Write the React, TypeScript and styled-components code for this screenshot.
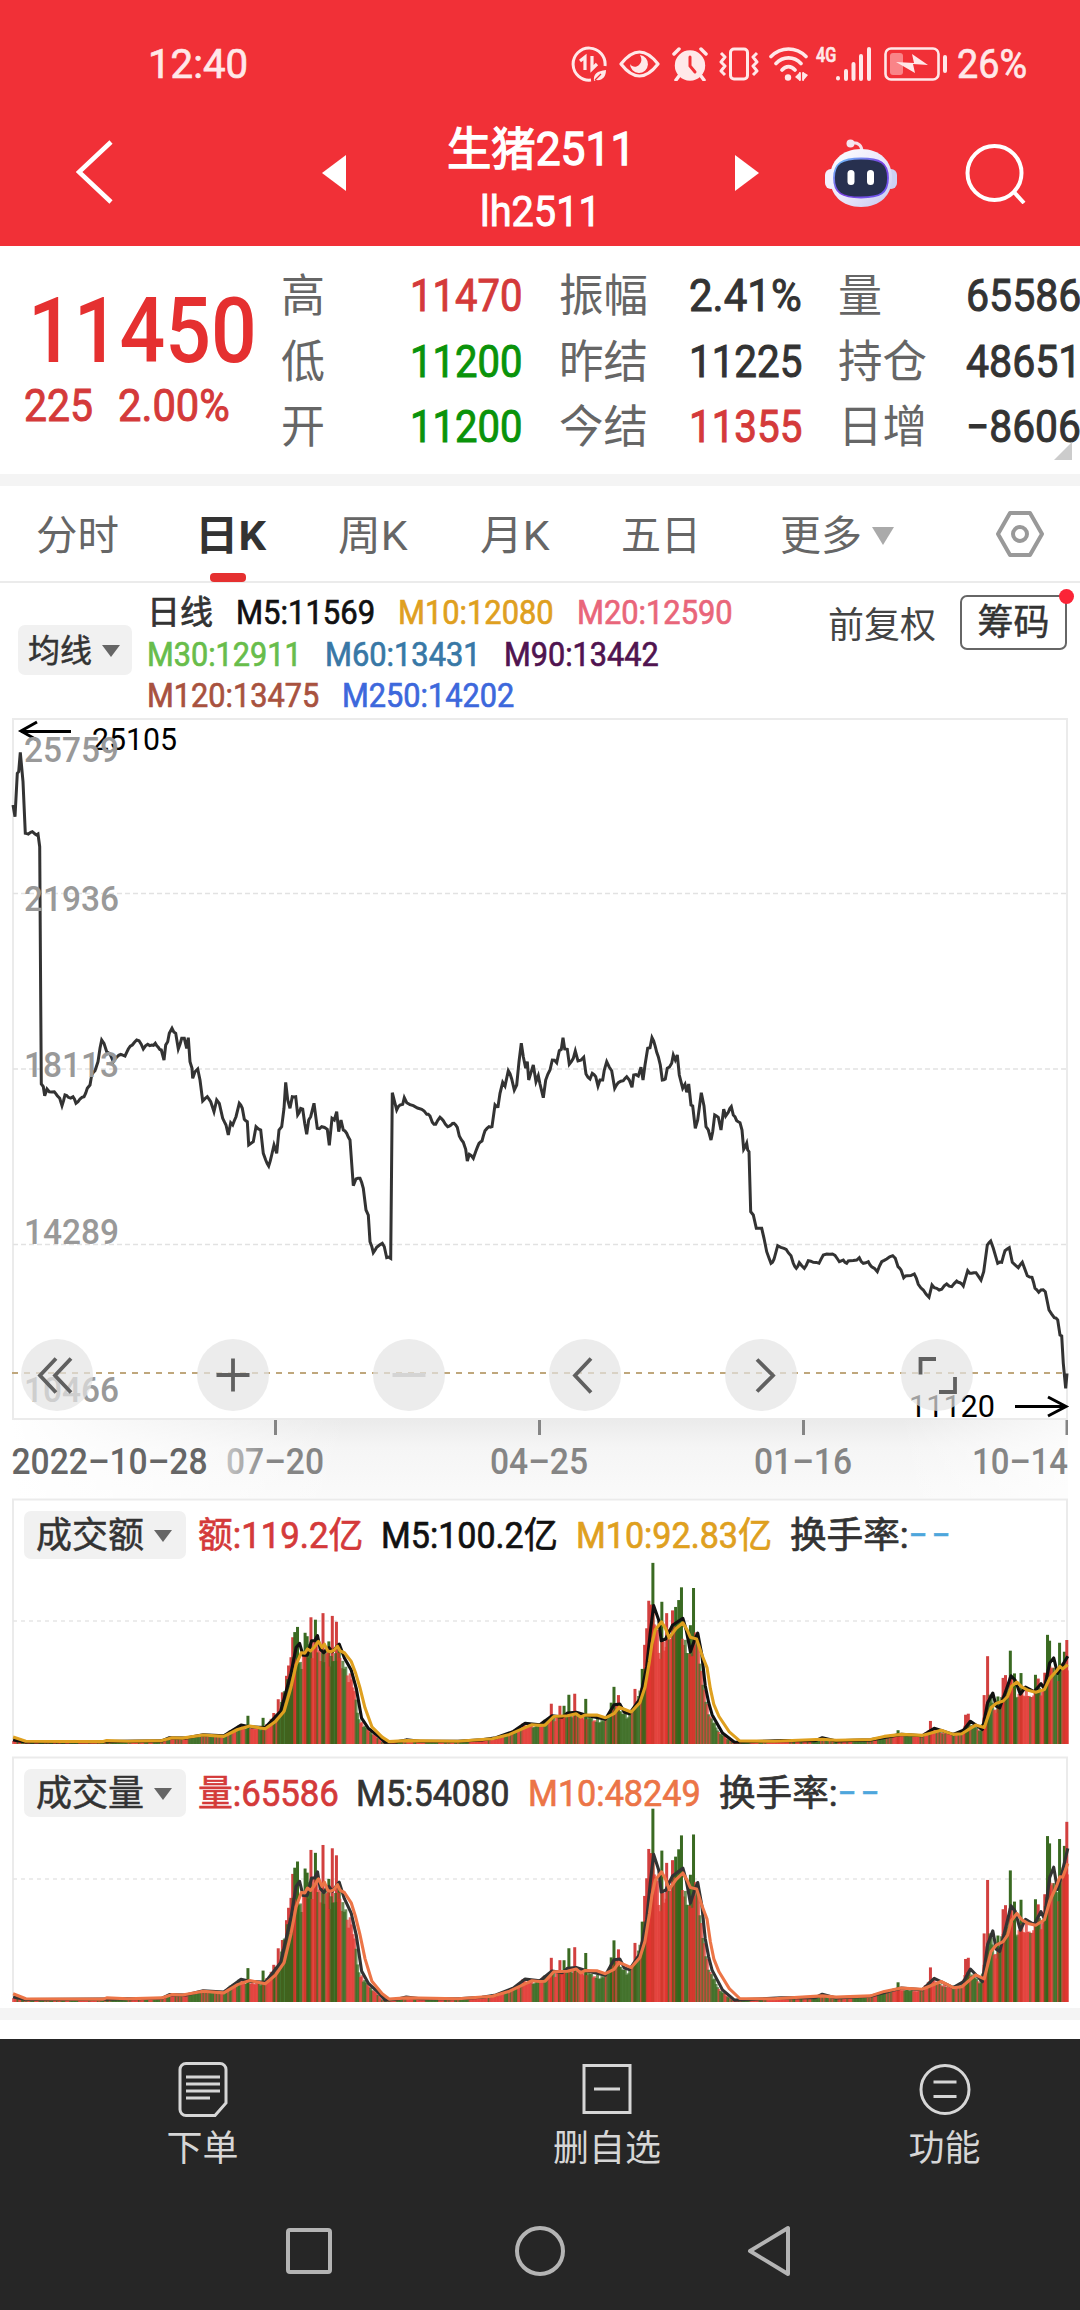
import React, { useLayoutEffect, useRef, useState } from "react";
import styled, { createGlobalStyle } from "styled-components";

const FONT = `Roboto, "Noto Sans CJK SC", sans-serif`;
const RED = "#d43a3a";
const GREEN = "#0a930a";
const INK = "#333333";

const GlobalStyle = createGlobalStyle`
  * { box-sizing: border-box; }
  html, body { margin: 0; padding: 0; background: #fff; }
  body { width: 1080px; overflow-x: hidden; font-family: ${FONT}; color: ${INK}; }
  svg { display: block; flex: none; }
`;

/* ---------- condensed text: squeezes a label to the width it is given ---------- */
const FitBox = styled.span<{ $w: number }>`
  display: inline-block;
  flex: none;
  width: ${(p) => p.$w}px;
  white-space: nowrap;
`;
const FitInner = styled.span`
  display: inline-block;
  transform-origin: 0 50%;
`;
function Fit({ w, children }: { w: number; children: React.ReactNode }) {
  const ref = useRef<HTMLSpanElement>(null);
  const [scale, setScale] = useState(1);
  useLayoutEffect(() => {
    if (ref.current) setScale(w / ref.current.offsetWidth);
  }, [w, children]);
  return (
    <FitBox $w={w}>
      <FitInner ref={ref} style={{ transform: `scaleX(${scale})` }}>{children}</FitInner>
    </FitBox>
  );
}

const Screen = styled.div`
  width: 1080px;
  height: 2310px;
  display: flex;
  flex-direction: column;
  background: #fff;
  overflow: hidden;
`;

/* ---------- header ---------- */
const Header = styled.header`
  height: 246px;
  flex: none;
  background: #f13037;
  color: #fff;
`;
const StatusBar = styled.div`
  height: 116px;
  padding: 12px 53px 0 148px;
  display: flex;
  align-items: center;
  color: #ffe8e9;
  font-size: 41px;
  line-height: 100px;
  -webkit-text-stroke: 0.7px currentColor;
`;
const StatusIcons = styled.div`
  margin-left: auto;
  display: flex;
  align-items: center;
`;
const Gap = styled.span<{ $w: number }>`
  width: ${(p) => p.$w}px;
  flex: none;
`;
const NavBar = styled.div`
  height: 114px;
  padding: 0 54px 0 76px;
  display: flex;
  align-items: center;
`;
const Switcher = styled.div`
  margin-left: 209px;
  width: 437px;
  display: flex;
  align-items: center;
  justify-content: space-between;
`;
const Titles = styled.div`
  display: flex;
  flex-direction: column;
  align-items: center;
  padding-top: 13px;
`;
const Title = styled.div`
  font-size: 46px;
  line-height: 64px;
  -webkit-text-stroke: 1.3px currentColor;
`;
const Code = styled.div`
  font-size: 42px;
  line-height: 62px;
  -webkit-text-stroke: 0.9px currentColor;
`;

function StatusGlyphs() {
  const c = "#ffe8e9";
  return (
    <>
      <svg width="36" height="36" viewBox="0 0 36 36" fill="none" stroke={c} strokeWidth="3">
        <path d="M34 20A16 16 0 1 0 20 34" />
        <path d="M9 15l5-4v13M21 10v13l5-5" strokeWidth="3.2" />
        <path d="M23 35c-1-7 3-10 12-11 0 7-4 11-10 10z" fill={c} stroke="none" />
        <path d="M24 34l6-6" stroke="#f13037" strokeWidth="1.3" />
      </svg>
      <Gap $w={12} />
      <svg width="41" height="28" viewBox="0 0 41 28" fill="none">
        <path d="M2 14C9 5 14 2 20.500 2S32 5 39 14C32 23 27 26 20.500 26S9 23 2 14z" stroke={c} strokeWidth="3.200" strokeLinejoin="round" />
        <path d="M21 5a9 9 0 1 1-10 9c2 3 6 4 9 1 3-3 3-6 1-10z" fill={c} />
      </svg>
      <Gap $w={12} />
      <svg width="36" height="34" viewBox="0 0 36 34" fill={c}>
        <circle cx="18" cy="18.500" r="15.200" />
        <path d="M2 7l5-5M34 7l-5-5M7 29l-3 4M29 29l3 4" stroke={c} strokeWidth="3.500" strokeLinecap="round" />
        <path d="M18 10v9l5 6" stroke="#f13037" strokeWidth="3" fill="none" strokeLinecap="round" />
      </svg>
      <Gap $w={11} />
      <svg width="40" height="34" viewBox="0 0 40 34" fill="none" stroke={c} strokeWidth="3">
        <rect x="11.500" y="2" width="17" height="30" rx="3.500" />
        <path d="M2 6l4 4-4 5 4 4-4 5 4 4M38 6l-4 4 4 5-4 4 4 5-4 4" strokeLinejoin="round" />
      </svg>
      <Gap $w={10} />
      <svg width="41" height="34" viewBox="0 0 41 34" fill="none" stroke={c} strokeWidth="3.600" strokeLinecap="round">
        <path d="M2 9.500C12-.5 27-.5 37 9.500M7 16.500c7-7.500 18-7.500 25 0M13 23c4-4.500 9-4.500 13 0" />
        <circle cx="19" cy="30.500" r="3.200" fill={c} stroke="none" />
        <path d="M26 30l5-5v9zM34 25v9l5-6z" fill={c} stroke="none" />
        <path d="M31 26v7M34 26v7" strokeWidth="1.800" />
      </svg>
    </>
  );
}

const NetTag = styled.span`
  margin: 0 0 19px 6px;
  font-size: 21px;
  line-height: 14px;
  font-weight: 500;
  width: 20px;
`;

function SignalBattery() {
  const c = "#ffe8e9";
  return (
    <>
      <NetTag><Fit w={20}>4G</Fit></NetTag>
      <svg width="35" height="34" viewBox="0 0 35 34" stroke={c} strokeWidth="4" strokeLinecap="round">
        <path d="M2 31v.5M10 24v8M17.500 17v15M25 9v23M33 2v30" />
      </svg>
      <Gap $w={13} />
      <svg width="64" height="34" viewBox="0 0 64 34" fill="none">
        <rect x="1.500" y="1.500" width="53" height="31" rx="5.500" stroke={c} strokeWidth="2.600" />
        <rect x="6" y="6" width="13" height="22" rx="3" fill="#f98488" />
        <path d="M12 15l18 1-2-9 16 11-15-1 2 9z" fill={c} />
        <path d="M61 10v14" stroke={c} strokeWidth="4" strokeLinecap="round" />
      </svg>
      <Gap $w={9} />
    </>
  );
}

function Robot() {
  return (
    <svg width="72" height="68" viewBox="0 0 72 68">
      <defs>
        <linearGradient id="shell" x1="0" y1="0" x2="1" y2="1">
          <stop offset="0" stopColor="#ffffff" />
          <stop offset=".55" stopColor="#e9e6fb" />
          <stop offset="1" stopColor="#c3c6ee" />
        </linearGradient>
        <linearGradient id="rim" x1="0" y1="0" x2="1" y2="1">
          <stop offset="0" stopColor="#6fd0ff" />
          <stop offset=".5" stopColor="#7a3fe0" />
          <stop offset="1" stopColor="#6a5af0" />
        </linearGradient>
      </defs>
      <path d="M26 4c8-1 11 3 11 9" stroke="#f8dfe9" strokeWidth="3" fill="none" />
      <circle cx="25.500" cy="4.500" r="4" fill="#f5e6f0" />
      <rect x="0" y="30" width="12" height="20" rx="6" fill="#f3f0fc" />
      <rect x="60" y="30" width="12" height="20" rx="6" fill="#cdd0f3" />
      <path d="M36 10c19 0 31 12 31 29S55 68 36 68 5 56 5 39 17 10 36 10z" fill="url(#shell)" />
      <path d="M36 19.500c19 0 27 4 27 19.500S55 58.500 36 58.500 9 54 9 39s8-19.500 27-19.500z" fill="#27304f" stroke="url(#rim)" strokeWidth="1.800" />
      <rect x="22.500" y="31" width="7" height="15" rx="3.500" fill="#fff" />
      <rect x="42" y="31" width="7" height="15" rx="3.500" fill="#fff" />
    </svg>
  );
}

/* ---------- quote ---------- */
const Quote = styled.section`
  position: relative;
  height: 228px;
  flex: none;
  display: flex;
`;
const LastPrice = styled.div`
  width: 281px;
  flex: none;
  padding: 35px 0 0 24px;
  color: #e53030;
`;
const Big = styled.div`
  font-size: 91px;
  font-weight: 500;
  line-height: 100px;
  padding-left: 4px;
`;
const Change = styled.div`
  display: flex;
  gap: 25px;
  font-size: 45px;
  line-height: 50px;
  color: ${RED};
  -webkit-text-stroke: 1px currentColor;
`;
const Facts = styled.div`
  padding-top: 17px;
  display: grid;
  grid-template-columns: 129px 149px 130px 149px 128px 118px;
  grid-auto-rows: 65.500px;
  line-height: 65px;
  font-size: 45px;
`;
const FactLabel = styled.span`
  padding-top: 1px;
  color: #666;
  font-size: 45px;
`;
const FactValue = styled.span<{ $c?: string }>`
  color: ${(p) => p.$c ?? INK};
  -webkit-text-stroke: 1px currentColor;
`;
const Corner = styled.span`
  position: absolute;
  right: 8px;
  bottom: 14px;
  border-left: 18px solid transparent;
  border-bottom: 18px solid #ccc;
`;
const Band = styled.div`
  height: 12px;
  flex: none;
  background: #f4f4f4;
`;

const FACTS: [string, number, string, number, string?][] = [
  ["高", 44, "11470", 112, RED], ["振幅", 89, "2.41%", 113], ["量", 44, "65586", 115],
  ["低", 44, "11200", 112, GREEN], ["昨结", 89, "11225", 113], ["持仓", 89, "48651", 115],
  ["开", 44, "11200", 112, GREEN], ["今结", 89, "11355", 113, RED], ["日增", 89, "−8606", 115],
];

/* ---------- period tabs ---------- */
const Tabs = styled.nav`
  height: 97px;
  flex: none;
  display: flex;
  align-items: stretch;
  padding-left: 36px;
  border-bottom: 2px solid #ebebeb;
  font-size: 41px;
  line-height: 90px;
  color: #666;
`;
const Tab = styled.div<{ $w: number }>`
  width: ${(p) => p.$w}px;
  padding-top: 4px;
  display: flex;
  align-items: center;
  gap: 10px;
`;
const ActiveTab = styled(Tab)`
  position: relative;
  font-weight: 700;
  color: ${INK};
  &::after {
    content: "";
    position: absolute;
    left: 15px;
    bottom: -1px;
    width: 36px;
    height: 9px;
    border-radius: 4px;
    background: #e53030;
  }
`;
const SettingsTab = styled(Tab)`
  padding-top: 0;
`;
const Caret = styled.span<{ $w: number; $h: number; $c: string }>`
  width: 0;
  height: 0;
  flex: none;
  border-left: ${(p) => p.$w / 2}px solid transparent;
  border-right: ${(p) => p.$w / 2}px solid transparent;
  border-top: ${(p) => p.$h}px solid ${(p) => p.$c};
`;

/* ---------- moving averages ---------- */
const Averages = styled.section`
  height: 135px;
  flex: none;
  display: flex;
`;
const Chip = styled.div<{ $w: number; $h: number; $size: number }>`
  width: ${(p) => p.$w}px;
  height: ${(p) => p.$h}px;
  flex: none;
  display: flex;
  align-items: center;
  justify-content: space-between;
  padding: 1px 14px 0 12px;
  border-radius: 7px;
  background: #f1f1f1;
  color: ${INK};
  font-size: ${(p) => p.$size}px;
  line-height: ${(p) => p.$h}px;
  -webkit-text-stroke: 0.5px currentColor;
`;
const AverageChip = styled(Chip)`
  margin: 42px 0 0 18px;
  padding: 1px 12px 0 10px;
`;
const AverageLines = styled.div`
  width: 696px;
  flex: none;
  padding: 9px 0 0 15px;
`;
const AverageLine = styled.div`
  display: flex;
  gap: 23px;
  height: 41.500px;
  line-height: 41px;
  font-size: 33px;
  -webkit-text-stroke: 0.7px currentColor;
`;
const Tint = styled.span<{ $c: string }>`
  color: ${(p) => p.$c};
`;
const Adjust = styled.div`
  margin-top: 12px;
  width: 132px;
  font-size: 36px;
  line-height: 62px;
  color: #444;
`;
const ChipsButton = styled.button`
  position: relative;
  margin-top: 12px;
  width: 107px;
  height: 55px;
  padding: 2px 0 0;
  border: 2px solid #666;
  border-radius: 7px;
  background: #fff;
  color: ${INK};
  font: 36px/49px ${FONT};
  -webkit-text-stroke: 0.5px currentColor;
  &::after {
    content: "";
    position: absolute;
    right: -9px;
    top: -8px;
    width: 15px;
    height: 15px;
    border-radius: 50%;
    background: #fb2437;
  }
`;

/* ---------- charts ---------- */
const ChartPanel = styled.section`
  position: relative;
  width: 1080px;
  height: 702px;
  flex: none;
`;
const Controls = styled.div`
  position: absolute;
  left: 21px;
  top: 621px;
  width: 952px;
  display: flex;
  justify-content: space-between;
`;
const RoundButton = styled.button`
  width: 72px;
  height: 72px;
  padding: 0;
  border: 0;
  border-radius: 50%;
  background: rgba(228, 228, 228, 0.7);
`;
const Axis = styled.div`
  height: 78px;
  flex: none;
  margin: 0 12px;
  background:
    linear-gradient(90deg, #fff 0, rgba(255, 255, 255, 0) 32%),
    linear-gradient(270deg, rgba(255, 255, 255, 0.7) 0, rgba(255, 255, 255, 0) 16%),
    linear-gradient(#ebebeb 0, #f5f5f5 35%, #fafafa 100%);
`;
const SubPanel = styled.section<{ $h: number }>`
  position: relative;
  height: ${(p) => p.$h}px;
  flex: none;
`;
const SubLegend = styled.div`
  position: absolute;
  left: 24px;
  top: 12px;
  display: flex;
  align-items: center;
  font-size: 36px;
  line-height: 48px;
`;
const LegendText = styled.span<{ $c: string; $ml: number }>`
  margin-left: ${(p) => p.$ml}px;
  padding-top: 2px;
  color: ${(p) => p.$c};
  -webkit-text-stroke: 0.7px currentColor;
`;
const Dashes = styled(LegendText)`
  letter-spacing: 6px;
`;

type P = [number, number];

/* closing prices, traced segment by segment in thirds of a pixel */
const SEG_A: P[] = [[39,315],[45,350],[52,220],[56,215],[61,157],[69,245],[76,400],[85,402],[92,397],[97,395],[105,402],[114,402],[119,440],[122,900],[124,1152],[130,1160],[134,1187],[141,1167],[148,1175],[163,1175],[172,1187],[179,1195],[186,1217],[195,1185],[205,1192],[219,1190],[228,1210],[240,1197],[252,1190],[262,1165],[270,1155],[275,1125],[285,1112],[294,1085],[300,1045],[305,1020],[312,1030],[320,1055],[330,1062],[340,1085],[350,1072],[362,1063],[375,1068],[385,1047],[397,1035],[410,1020],[417,1022],[430,1047],[443,1033],[455,1035],[466,1030],[475,1042],[484,1050],[492,1080],[497,1035],[503,1025],[508,1000],[516,985],[527,1000],[535,1047],[545,1015],[553,1015],[560,1045],[565,1013],[570,1085],[576,1105],[578,1135],[585,1115],[593,1107],[600,1140],[608,1203],[622,1190],[632,1205],[642,1235],[650,1200],[658,1210],[668,1255],[678,1275],[685,1305],[692,1268],[698,1275],[708,1250],[718,1210],[727,1225],[733,1258],[742,1265]];
const SEG_B: P[] = [[746,495],[760,485],[768,440],[782,450],[790,520],[797,540],[806,558],[815,525],[822,495],[830,520],[837,450],[845,440],[852,385],[857,307],[863,360],[870,385],[877,350],[887,350],[893,405],[902,385],[908,387],[914,430],[920,463],[926,420],[932,410],[942,370],[952,445],[965,440],[982,448],[988,496],[996,415],[1003,420],[1010,395],[1016,455],[1023,420],[1030,450],[1040,460],[1050,480],[1060,617],[1068,597],[1080,595],[1090,625],[1098,690],[1105,705],[1110,785],[1120,818],[1130,802],[1147,790],[1153,800],[1160,833]];
const SEG_C: P[] = [[32,835],[37,338],[50,390],[60,375],[68,373],[73,353],[80,368],[100,377],[125,388],[140,403],[150,408],[157,427],[167,433],[180,412],[190,422],[203,440],[213,435],[222,430],[232,442],[238,468],[250,487],[257,508],[262,543],[268,523],[280,535],[288,512],[297,490],[306,483],[315,452],[327,440],[336,440],[345,375],[354,380],[360,340],[368,307],[375,318],[385,272],[395,297],[403,330],[410,315],[417,245],[424,190],[430,230],[437,265],[442,245],[446,300],[460,255],[468,305],[475,287],[480,312],[490,353],[497,300],[510,270],[517,240],[530,248],[538,212],[544,208],[549,173],[554,207],[562,208],[568,253],[580,235],[586,213],[594,243],[611,232],[618,282],[630,297],[637,280],[647,290],[654,318],[660,300],[668,300],[673,270],[680,245],[695,272],[704,325],[715,308],[730,302],[740,290],[748,300],[756,322],[761,285],[775,288],[783,262],[789,300],[795,255],[803,205],[810,203],[816,173],[826,200],[835,230],[841,255],[847,300],[856,297],[862,265],[875,250],[880,225],[886,240],[892,225],[898,285],[908,325],[915,313],[920,337],[926,312],[933,375],[938,378],[946,445],[953,420],[964,338],[972,378],[978,440],[985,450],[993,480],[998,455],[1004,405],[1015,412],[1023,450],[1031,388],[1037,408],[1045,397],[1054,380],[1060,405],[1070,422],[1080,428],[1086,450],[1091,508],[1100,490],[1103,510],[1107,515],[1112,695],[1120,705],[1129,745],[1145,745],[1152,775],[1160,815],[1173,850],[1182,838]];
const SEG_D: P[] = [[233,437],[252,445],[265,458],[273,467],[280,490],[289,505],[298,488],[313,505],[325,482],[340,487],[357,490],[370,465],[390,463],[405,466],[418,485],[430,480],[440,490],[450,482],[470,480],[478,473],[490,490],[505,485],[515,500],[532,515],[545,485],[560,477],[578,467],[586,475],[594,500],[603,510],[611,533],[622,527],[643,522],[655,553],[670,570],[687,592],[696,555],[710,565],[725,568],[740,552],[755,560],[770,543],[780,548],[790,558],[803,512],[815,520],[828,518],[843,540],[851,515],[862,435],[872,423],[880,445],[893,490],[905,487],[915,452],[928,443],[937,487],[955,503],[967,487],[982,527],[996,532],[1005,565],[1016,577],[1023,570],[1036,575],[1047,630],[1063,653],[1073,660],[1080,705],[1085,708],[1090,790],[1097,865],[1101,820]];

const PRICE_TOP = 718;
const third = (seg: P[], dx: number, dy: number): P[] => seg.map(([x, y]) => [dx + x / 3, dy + y / 3 - PRICE_TOP]);
const PRICE: P[] = [...third(SEG_A, 0, 700), ...third(SEG_B, 0, 980), ...third(SEG_C, 380, 980), ...third(SEG_D, 700, 1100)];
const toPoints = (pts: P[]) => pts.map(([x, y]) => `${x.toFixed(1)},${y.toFixed(1)}`).join(" ");

const noise = (i: number) => {
  const v = Math.sin(i * 127.1 + 11.7) * 43758.5453;
  return v - Math.floor(v);
};

/* small tick-to-tick wobble between the traced points */
const PRICE_LINE: P[] = PRICE.flatMap((p, i) => {
  const q = PRICE[i + 1];
  if (!q || Math.abs(q[1] - p[1]) > 12 || q[0] - p[0] < 3) return [p];
  const mid: P = [(p[0] + q[0]) / 2, (p[1] + q[1]) / 2 + (noise(i) - 0.5) * 2.4];
  return [p, mid];
});

const GRID = [175.5, 351, 526.5];
const PRICE_LABELS: [string, number][] = [["25759", 43.5], ["21936", 193], ["18113", 359], ["14289", 526], ["10466", 684]];

function PriceChart() {
  return (
    <svg width="1080" height="702" viewBox="0 0 1080 702" fontFamily={FONT}>
      <rect x="13" y="1" width="1054" height="700" fill="#fff" stroke="#ebebeb" strokeWidth="2" />
      {GRID.map((y) => (
        <path key={y} d={`M13 ${y}H1066`} stroke="#e2e2e2" strokeWidth="1.300" strokeDasharray="5 3" />
      ))}
      <path d="M12 655H1066" stroke="#bfa77c" strokeWidth="2" strokeDasharray="6 6" />
      <path d="M37 4L21 13l16 9M21 13.500h50" stroke="#000" strokeWidth="3" fill="none" />
      <text x="92" y="32" fontSize="31" textLength="85" lengthAdjust="spacingAndGlyphs" fill="#000">25105</text>
      <polyline points={toPoints(PRICE_LINE)} fill="none" stroke={INK} strokeWidth="3" />
      {PRICE_LABELS.map(([t, y]) => (
        <text key={t} x="24" y={y} fontSize="35.500" fontWeight="500" textLength="95" lengthAdjust="spacingAndGlyphs" fill="#999">{t}</text>
      ))}
      <text x="909" y="699" fontSize="31" textLength="86" lengthAdjust="spacingAndGlyphs" fill="#000">11120</text>
      <path d="M1048 679l18 9.500-18 9.500M1015 688.500h50" stroke="#000" strokeWidth="3" fill="none" />
    </svg>
  );
}

const CONTROL_PATHS: [string, string?][] = [
  ["M35 19.500L19 36.500l16 17M50 19.500L34 36.500l16 17"],
  ["M36 19.500v33M19.500 36h33"],
  ["M19.500 36h33", "#d4d4d4"],
  ["M42 19.500L26 36.500l16 17"],
  ["M32 20.500l16 16-16 16"],
  ["M19.500 35.500V20H35M38 53h16V38"],
];

const DATES: [string, number, number, string][] = [
  ["2022-10-28", -0.5, 196, "#666"], ["07-20", 214, 98, "url(#fadeIn)"], ["04-25", 478, 98, "#858585"], ["01-16", 742, 98, "#858585"], ["10-14", 960, 96, "#858585"],
];

function DateAxis() {
  return (
    <svg width="1056" height="78" viewBox="0 0 1056 78" fontFamily={FONT}>
      <defs>
        <linearGradient id="fadeIn">
          <stop offset="0" stopColor="#c4c4c4" />
          <stop offset=".45" stopColor="#858585" />
        </linearGradient>
      </defs>
      {[263.5, 527.5, 791.5, 1055].map((x) => (
        <path key={x} d={`M${x} 0v15`} stroke="#858585" strokeWidth="3" />
      ))}
      {DATES.map(([t, x, w, c]) => (
        <text key={t} x={x} y="53.500" fontSize="36" fontWeight="500" textLength={w} lengthAdjust="spacingAndGlyphs" fill={c}>{t.replace(/-/g, "–")}</text>
      ))}
    </svg>
  );
}

/* ---------- turnover / volume series, in units of 1/2.904 px ---------- */
const U = 2.904;
const R0 = 1568;
const shift = (pts: P[]): P[] => pts.map(([x, y]) => [x + R0, y]);
const MA10: P[] = [[38,20],[75,8],[300,7],[310,10],[370,8],[470,10],[500,18],[530,17],[590,26],[650,22],[690,42],[725,52],[770,44],[800,65],[825,95],[845,165],[860,230],[875,265],[885,264],[893,276],[902,270],[912,280],[925,298],[935,280],[942,290],[952,270],[960,268],[970,272],[980,284],[988,270],[1000,265],[1020,240],[1033,205],[1045,165],[1060,105],[1080,50],[1110,20],[1130,7],[1180,10],[1330,8],[1430,15],[1480,28],[1545,56],
  ...shift([[0,54],[15,55],[40,80],[80,82],[105,88],[118,78],[130,84],[165,84],[190,76],[215,88],[230,107],[265,93],[290,120],[305,165],[318,240],[325,290],[335,332],[353,355],[365,335],[375,308],[395,335],[415,352],[428,330],[437,310],[455,305],[470,260],[485,222],[495,160],[505,115],[520,80],[550,35],[580,9],[680,8],[820,14],[860,11],[960,13],[1000,22],[1050,28],[1110,25],[1165,40],[1200,28],[1225,30],[1265,55],[1290,48],[1310,105],[1325,118],[1345,125],[1358,138],[1370,168],[1385,180],[1400,165],[1420,155],[1440,150],[1465,158],[1480,190],[1500,212],[1510,225],[1518,218],[1533,230]])];
const MA5: P[] = [[38,12],[75,6],[300,7],[470,9],[492,18],[540,17],[590,27],[650,24],[700,55],[725,50],[770,48],[815,95],[830,150],[845,205],[860,280],[870,292],[880,258],[892,258],[905,300],[914,300],[922,315],[930,275],[940,265],[955,280],[965,268],[985,290],[1000,250],[1020,215],[1035,160],[1050,75],[1070,45],[1100,22],[1118,5],[1150,6],[1180,12],[1220,8],[1330,8],[1400,12],[1440,18],[1490,36],[1525,60],
  ...shift([[0,56],[35,82],[65,78],[80,90],[105,92],[140,82],[190,72],[215,114],[232,116],[245,92],[260,88],[290,130],[310,225],[320,320],[330,402],[345,360],[352,300],[365,305],[385,345],[415,365],[425,330],[437,268],[450,305],[458,322],[470,260],[480,170],[490,120],[500,85],[530,32],[565,5],[700,10],[800,10],[820,18],[860,9],[960,12],[1050,28],[1110,24],[1145,46],[1200,28],[1230,40],[1250,66],[1285,42],[1300,120],[1315,148],[1325,110],[1335,105],[1355,160],[1368,198],[1380,185],[1395,145],[1410,165],[1435,152],[1455,175],[1465,160],[1480,235],[1492,250],[1503,205],[1515,225],[1533,255]])];
type Spike = [number, number, "r" | "g"];
const SPIKES: Spike[] = [[720,82,"g"],[764,76,"g"],[795,90,"r"],[808,130,"r"],[820,150,"r"],[832,198,"r"],[838,228,"r"],[845,252,"r"],[850,310,"r"],[856,325,"g"],[864,340,"g"],[886,323,"g"],[892,313,"g"],[903,368,"r"],[916,361,"g"],[938,380,"r"],[955,298,"g"],[965,372,"r"],[977,355,"r"],[985,290,"g"],
  ...([[33,117,"r"],[58,111,"r"],[70,111,"g"],[84,143,"g"],[101,146,"r"],[133,131,"g"],[207,120,"g"],[215,166,"g"],[228,142,"r"],[276,160,"r"],[297,218,"g"],[304,288,"r"],[310,336,"r"],[316,416,"r"],[322,405,"r"],[328,526,"g"],[354,413,"g"],[368,380,"r"],[385,388,"r"],[394,398,"g"],[403,418,"g"],[411,455,"g"],[437,345,"g"],[446,453,"g"],[1040,40,"g"],[1134,67,"r"],[1236,85,"r"],[1244,88,"r"],[1290,142,"r"],[1300,255,"r"],[1330,138,"g"],[1345,192,"r"],[1352,200,"r"],[1366,271,"g"],[1378,205,"g"],[1397,206,"g"],[1439,201,"g"],[1447,190,"r"],[1466,207,"r"],[1474,317,"g"],[1480,300,"g"],[1509,294,"g"],[1523,268,"g"],[1530,302,"r"]] as Spike[]).map(([x, h, c]): Spike => [x + R0, h, c])];
const VOLUME_RATIO: P[] = [[0, 1.2], [1100, 1.2], [1568, 1.1], [1968, 1.06], [2100, 1.1], [2300, 1.2], [2702, 1.5], [2804, 1.47], [2868, 1.39], [2934, 1.41], [3042, 1.52], [3077, 1.61], [3101, 1.75]];

function lerp(pts: P[], x: number) {
  if (x <= pts[0][0]) return pts[0][1];
  for (let i = 1; i < pts.length; i++) {
    const [x1, y1] = pts[i];
    const [x0, y0] = pts[i - 1];
    if (x <= x1) return y0 + ((y1 - y0) * (x - x0)) / (x1 - x0);
  }
  return pts[pts.length - 1][1];
}

function SubChart({ h, base, grid, volume, fast, slow }: { h: number; base: number; grid: number; volume?: boolean; fast: string; slow: string }) {
  const k = (x: number) => (volume ? lerp(VOLUME_RATIO, x) : 1);
  const line = (pts: P[]) => toPoints(pts.map(([x, y]): P => [x / U, base - (y * k(x)) / U]));
  const bars: { x: number; h: number; c: string }[] = [];
  for (let i = 0; i < 722; i++) {
    const x = 38 + i * 4.25;
    if (x > 3098) break;
    const run = noise(Math.floor(i / 3) + 400) * 0.55 + noise(i) * 0.45;
    const v = lerp(MA5, x + 7) * (0.82 + 0.2 * noise(i + 900));
    bars.push({ x, h: v, c: run > 0.5 ? "#e2342f" : "#33661a" });
  }
  return (
    <svg width="1080" height={h} viewBox={`0 0 1080 ${h}`}>
      <path d={`M13 ${base}V1.500H1067V${base}`} fill="none" stroke="#ebebeb" strokeWidth="2" />
      <path d={`M13 ${grid}H1066`} stroke="#e6e6e6" strokeWidth="1.500" strokeDasharray="4 4" />
      {SPIKES.map(([x, v, c]) => (
        <rect key={x} x={x / U - 1.5} y={base - (v * k(x)) / U} width="3" height={(v * k(x)) / U} fill={c === "r" ? "#d2403f" : "#3a6a22"} />
      ))}
      {bars.map((b) => {
        const bh = Math.max(1.5, (b.h * k(b.x)) / U);
        return <rect key={b.x} x={b.x / U - 1} y={base - bh} width="3" height={bh} fill={b.c} opacity=".72" />;
      })}
      <polyline points={line(MA5)} fill="none" stroke={fast} strokeWidth="3.100" strokeLinejoin="round" />
      <polyline points={line(MA10)} fill="none" stroke={slow} strokeWidth="3.100" strokeLinejoin="round" />
    </svg>
  );
}

/* ---------- bottom ---------- */
const Footer = styled.footer`
  margin-top: 19px;
  flex: 1;
  background: #262626;
`;
const Actions = styled.div`
  height: 157px;
  display: grid;
  grid-template-columns: 405px 404px 271px;
`;
const Action = styled.div`
  display: flex;
  flex-direction: column;
  align-items: center;
  padding-top: 22px;
  font-size: 36px;
  line-height: 60px;
  color: #d6d6d6;
`;
const SystemNav = styled.div`
  display: flex;
  align-items: center;
  padding: 29px 0 0 286px;
`;

export default function App() {
  return (
    <Screen>
      <GlobalStyle />
      <Header>
        <StatusBar>
          <Fit w={100}>12:40</Fit>
          <StatusIcons>
            <StatusGlyphs />
            <SignalBattery />
            <Fit w={70}>26%</Fit>
          </StatusIcons>
        </StatusBar>
        <NavBar>
          <svg width="37" height="66" viewBox="0 0 37 66" fill="none" stroke="#fff" strokeWidth="4.600">
            <path d="M35 2L3 32l32 30" />
          </svg>
          <Switcher>
            <svg width="24" height="36" viewBox="0 0 24 36"><path d="M24 0v36L0 18z" fill="#fff" /></svg>
            <Titles>
              <Title><Fit w={188}>生猪2511</Fit></Title>
              <Code><Fit w={121}>lh2511</Fit></Code>
            </Titles>
            <svg width="24" height="36" viewBox="0 0 24 36"><path d="M0 0v36l24-18z" fill="#fff" /></svg>
          </Switcher>
          <Gap $w={66} />
          <Robot />
          <Gap $w={68} />
          <svg width="61" height="61" viewBox="0 0 61 61" fill="none" stroke="#fff" strokeWidth="4">
            <circle cx="29.500" cy="30" r="27" />
            <path d="M48 48l11 12" />
          </svg>
        </NavBar>
      </Header>

      <Quote>
        <LastPrice>
          <Big><Fit w={229}>11450</Fit></Big>
          <Change><Fit w={69}>225</Fit><Fit w={112}>2.00%</Fit></Change>
        </LastPrice>
        <Facts>
          {FACTS.map(([label, lw, value, vw, c], i) => (
            <React.Fragment key={i}>
              <FactLabel><Fit w={lw}>{label}</Fit></FactLabel>
              <FactValue $c={c}><Fit w={vw}>{value}</Fit></FactValue>
            </React.Fragment>
          ))}
        </Facts>
        <Corner />
      </Quote>
      <Band />

      <Tabs>
        <Tab $w={159}><Fit w={83}>分时</Fit></Tab>
        <ActiveTab $w={143}><Fit w={71}>日K</Fit></ActiveTab>
        <Tab $w={142}><Fit w={70}>周K</Fit></Tab>
        <Tab $w={141}><Fit w={70}>月K</Fit></Tab>
        <Tab $w={159}><Fit w={80}>五日</Fit></Tab>
        <Tab $w={216}>更多<Caret $w={23} $h={18} $c="#aaa" /></Tab>
        <SettingsTab $w={60}>
          <svg width="48" height="46" viewBox="0 0 48 46" fill="none" stroke="#999" strokeWidth="4" strokeLinejoin="round">
            <path d="M14 2h20l12 21-12 21H14L2 23z" />
            <circle cx="24" cy="23" r="7" />
          </svg>
        </SettingsTab>
      </Tabs>

      <Averages>
        <AverageChip $w={114} $h={50} $size={32}>均线<Caret $w={18} $h={12} $c="#666" /></AverageChip>
        <AverageLines>
          <AverageLine>
            <Fit w={66}>日线</Fit>
            <Tint $c="#111"><Fit w={139}>M5:11569</Fit></Tint>
            <Tint $c="#dfa01f"><Fit w={156}>M10:12080</Fit></Tint>
            <Tint $c="#e9667a"><Fit w={156}>M20:12590</Fit></Tint>
          </AverageLine>
          <AverageLine>
            <Tint $c="#68bd4b"><Fit w={155}>M30:12911</Fit></Tint>
            <Tint $c="#3878a6"><Fit w={156}>M60:13431</Fit></Tint>
            <Tint $c="#501450"><Fit w={155}>M90:13442</Fit></Tint>
          </AverageLine>
          <AverageLine>
            <Tint $c="#a8523f"><Fit w={172}>M120:13475</Fit></Tint>
            <Tint $c="#3d68dc"><Fit w={172}>M250:14202</Fit></Tint>
          </AverageLine>
        </AverageLines>
        <Adjust>前复权</Adjust>
        <ChipsButton>筹码</ChipsButton>
      </Averages>

      <ChartPanel>
        <PriceChart />
        <Controls>
          {CONTROL_PATHS.map(([d, c]) => (
            <RoundButton key={d}>
              <svg width="72" height="72" viewBox="0 0 72 72" fill="none" stroke={c ?? "#606060"} strokeWidth="3.800">
                <path d={d} />
              </svg>
            </RoundButton>
          ))}
        </Controls>
      </ChartPanel>
      <Axis><DateAxis /></Axis>

      <SubPanel $h={258}>
        <SubChart h={246} base={246} grid={123} fast="#111" slow="#dfa01f" />
        <SubLegend>
          <Chip $w={162} $h={48} $size={36}>成交额<Caret $w={18} $h={12} $c="#666" /></Chip>
          <LegendText $c={RED} $ml={12}><Fit w={165}>额:119.2亿</Fit></LegendText>
          <LegendText $c="#111" $ml={18}><Fit w={177}>M5:100.2亿</Fit></LegendText>
          <LegendText $c="#dfa01f" $ml={18}><Fit w={196}>M10:92.83亿</Fit></LegendText>
          <LegendText $c={INK} $ml={18}><Fit w={119}>换手率:</Fit></LegendText>
          <Dashes $c="#4ea6dc" $ml={0}><Fit w={46}>––</Fit></Dashes>
        </SubLegend>
      </SubPanel>
      <SubPanel $h={252}>
        <SubChart h={246} base={246} grid={123} volume fast="#333" slow="#ec7547" />
        <SubLegend>
          <Chip $w={162} $h={48} $size={36}>成交量<Caret $w={18} $h={12} $c="#666" /></Chip>
          <LegendText $c={RED} $ml={12}><Fit w={141}>量:65586</Fit></LegendText>
          <LegendText $c={INK} $ml={17}><Fit w={154}>M5:54080</Fit></LegendText>
          <LegendText $c="#ec7547" $ml={18}><Fit w={173}>M10:48249</Fit></LegendText>
          <LegendText $c={INK} $ml={18}><Fit w={119}>换手率:</Fit></LegendText>
          <Dashes $c="#4ea6dc" $ml={0}><Fit w={46}>––</Fit></Dashes>
        </SubLegend>
      </SubPanel>
      <Band />

      <Footer>
        <Actions>
          <Action>
            <svg width="50" height="58" viewBox="0 0 50 58" fill="none" stroke="#d6d6d6" strokeWidth="3">
              <path d="M8 2.500h34a6 6 0 0 1 6 6V42L37 54.500H8a6 6 0 0 1-6-6v-40a6 6 0 0 1 6-6z" />
              <path d="M8 16h34M8 23h34M8 30h34M8 37h24" />
            </svg>
            下单
          </Action>
          <Action>
            <svg width="50" height="58" viewBox="0 0 50 58" fill="none" stroke="#d6d6d6" strokeWidth="3">
              <path d="M2 4.500h46v47H2zM12 28h26" />
            </svg>
            删自选
          </Action>
          <Action>
            <svg width="52" height="58" viewBox="0 0 52 58" fill="none" stroke="#d6d6d6" strokeWidth="3">
              <circle cx="26" cy="28.500" r="24" />
              <path d="M14.500 21h23M14.500 35.500h23" />
            </svg>
            功能
          </Action>
        </Actions>
        <SystemNav>
          <svg width="46" height="52" viewBox="0 0 46 52" fill="none" stroke="#b4b4b4" strokeWidth="4">
            <rect x="2" y="5" width="42" height="42" rx="2" />
          </svg>
          <Gap $w={182} />
          <svg width="52" height="52" viewBox="0 0 52 52" fill="none" stroke="#b4b4b4" strokeWidth="4">
            <circle cx="26" cy="26" r="23" />
          </svg>
          <Gap $w={181} />
          <svg width="44" height="52" viewBox="0 0 44 52" fill="none" stroke="#b4b4b4" strokeWidth="4" strokeLinejoin="round">
            <path d="M41 3v46L3 26z" />
          </svg>
        </SystemNav>
      </Footer>
    </Screen>
  );
}
